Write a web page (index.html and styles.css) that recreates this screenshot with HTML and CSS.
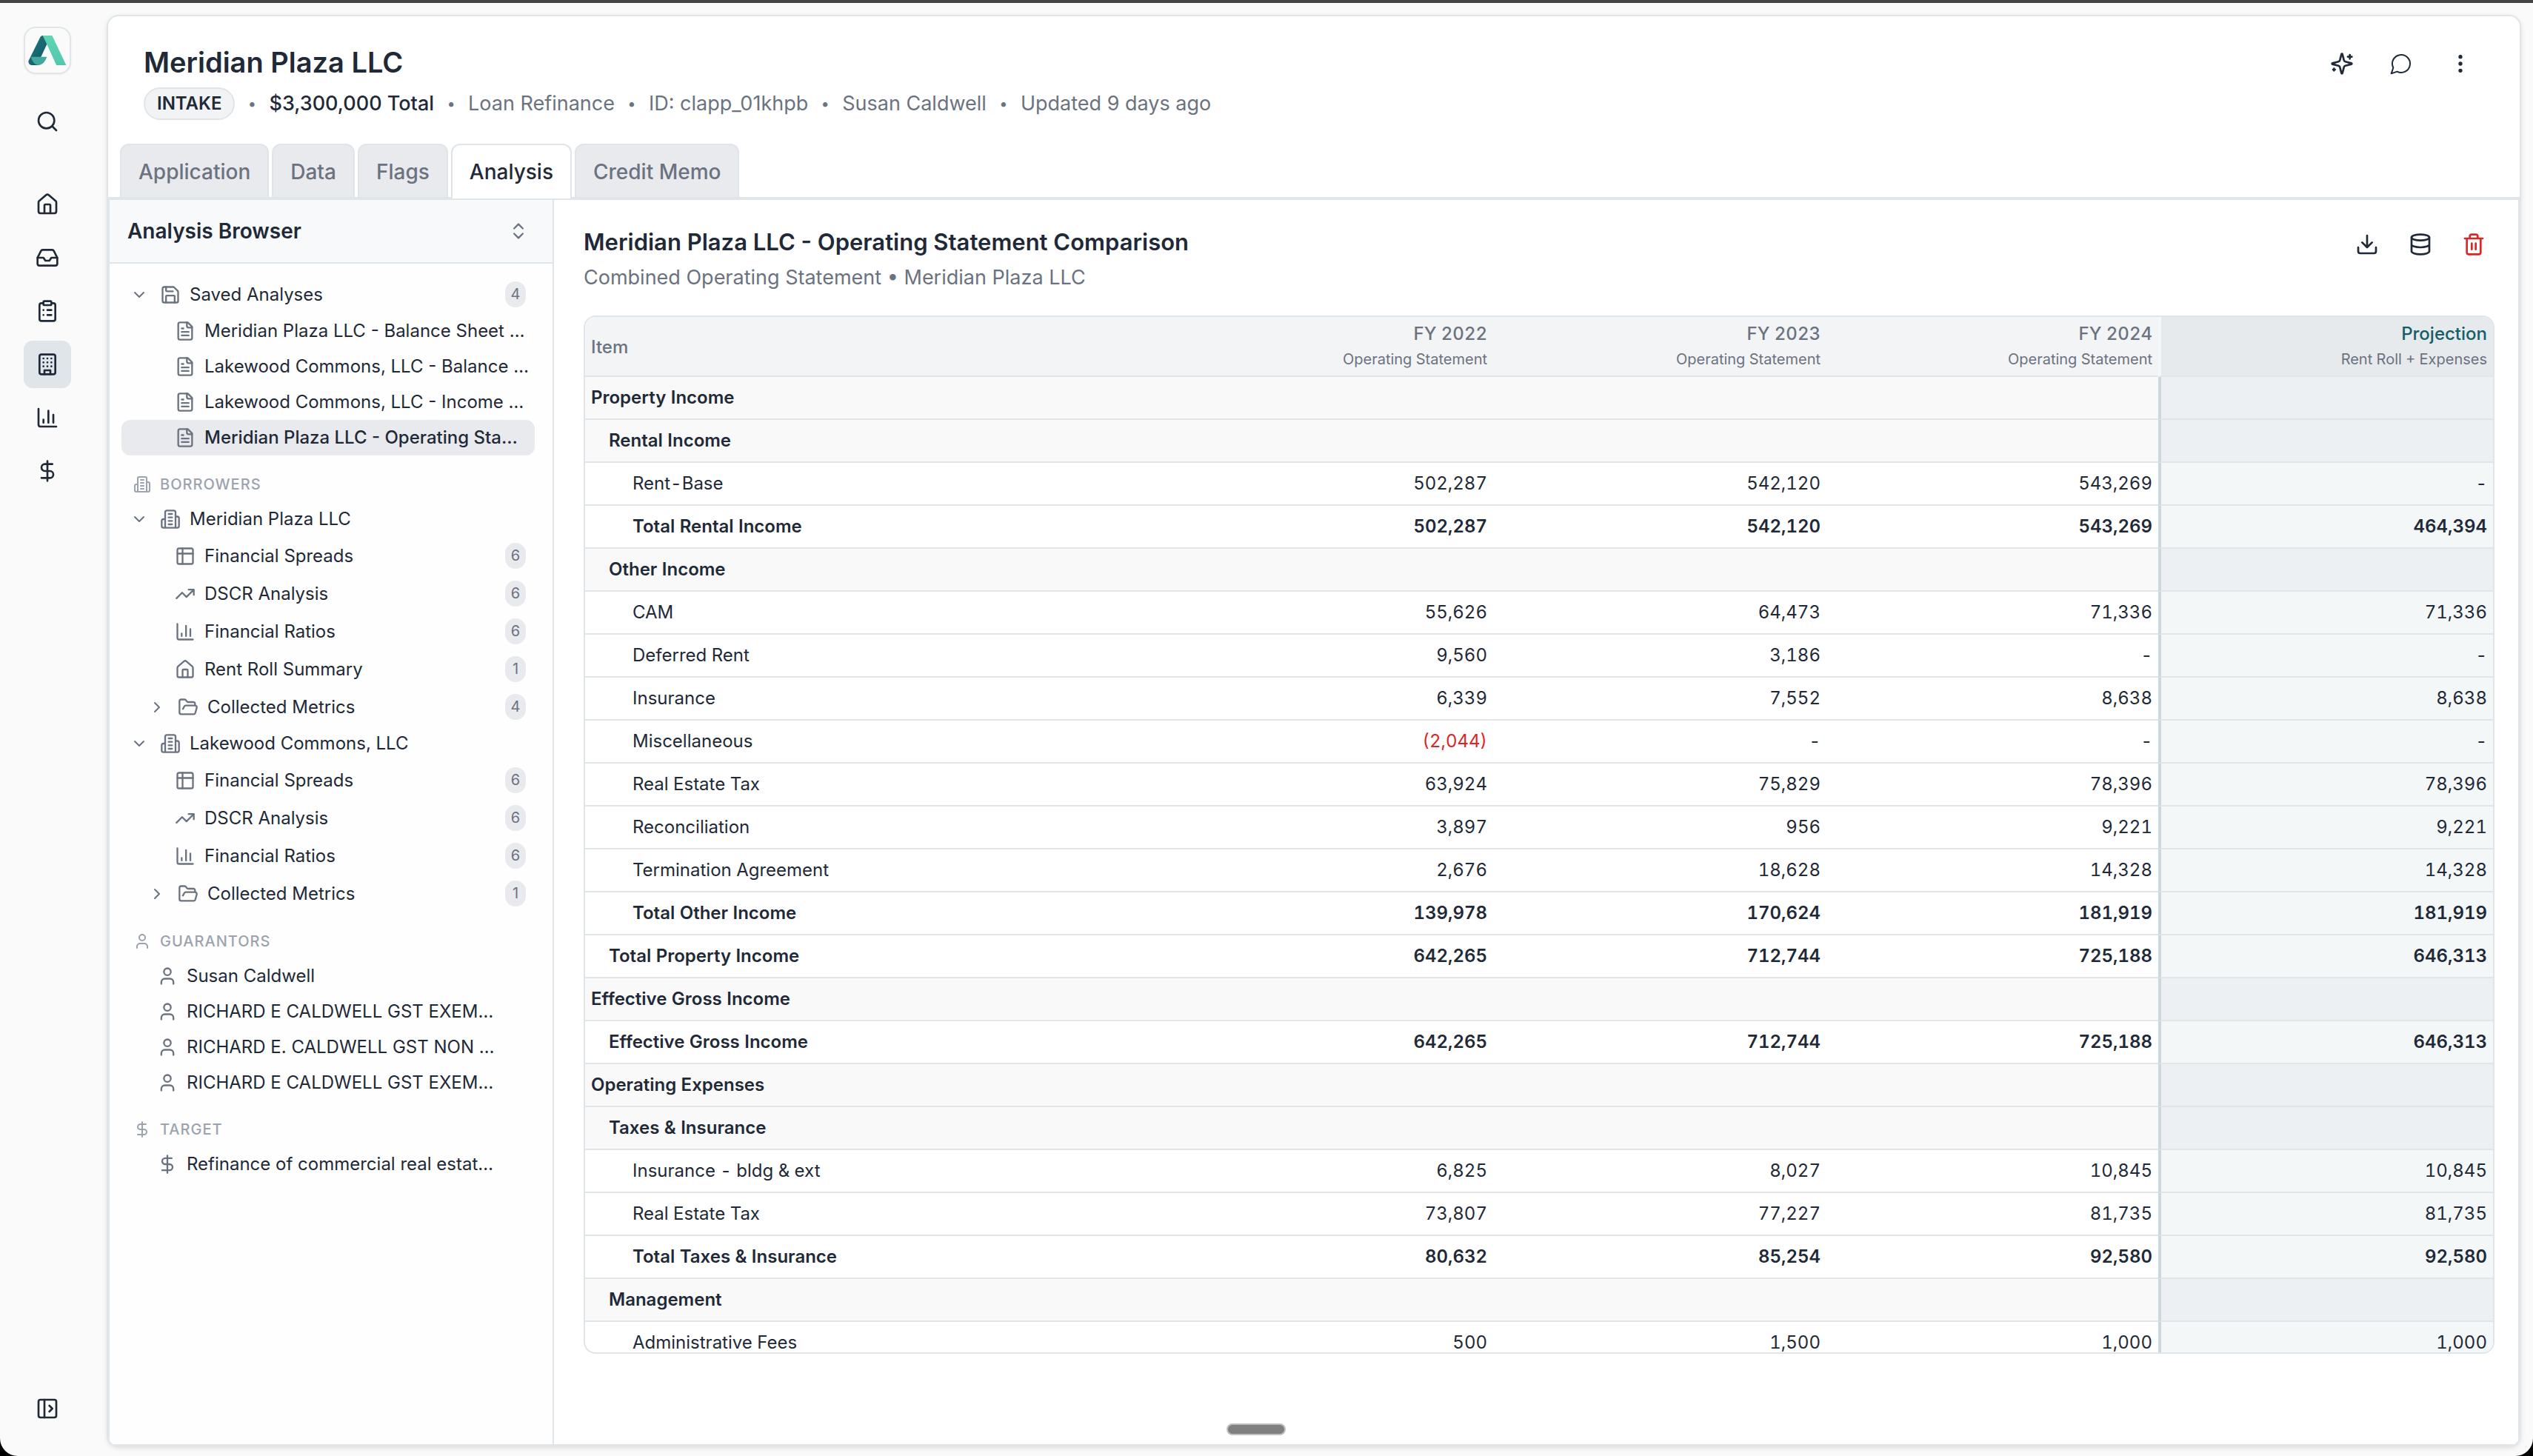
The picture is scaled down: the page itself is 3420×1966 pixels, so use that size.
FILE: index.html
```html
<!DOCTYPE html>
<html lang="en">
<head>
<meta charset="utf-8">
<title>Meridian Plaza LLC - Analysis</title>
<link rel="stylesheet" href="styles.css">
</head>
<body>
<svg class="sprite" aria-hidden="true">
  <defs>
    <linearGradient id="logo-dark" x1="0" y1="0" x2="1" y2="1"><stop offset="0" stop-color="#1f7a83"/><stop offset="1" stop-color="#125561"/></linearGradient>
    <linearGradient id="logo-light" x1="0" y1="0" x2="0" y2="1"><stop offset="0" stop-color="#5fd6b2"/><stop offset="1" stop-color="#54c6ae"/></linearGradient>
  </defs>
  <symbol id="logo" viewBox="0 0 154 122">
    <path fill="url(#logo-dark)" d="M49 7Q52 2 58 2H66L76 34L50 90L42 120H16Q2 120 1 106Q2 101 5 96Z"/>
    <path fill="url(#logo-light)" d="M58 2H96L152 120H113L74 34Z"/>
    <path fill="#43a99f" d="M12 87H75C68 106 58 120 40 120C26 118 14 104 12 87Z"/>
  </symbol>
  <symbol id="search" viewBox="0 0 24 24"><circle cx="11" cy="11" r="8"/><path d="m21 21-4.3-4.3"/></symbol>
  <symbol id="home" viewBox="0 0 24 24"><path d="M15 21v-8a1 1 0 0 0-1-1h-4a1 1 0 0 0-1 1v8"/><path d="M3 10a2 2 0 0 1 .709-1.528l7-5.999a2 2 0 0 1 2.582 0l7 5.999A2 2 0 0 1 21 10v9a2 2 0 0 1-2 2H5a2 2 0 0 1-2-2z"/></symbol>
  <symbol id="inbox" viewBox="0 0 24 24"><path d="M22 12h-6l-2 3h-4l-2-3H2"/><path d="M5.45 5.11 2 12v6a2 2 0 0 0 2 2h16a2 2 0 0 0 2-2v-6l-3.45-6.89A2 2 0 0 0 16.76 4H7.24a2 2 0 0 0-1.79 1.11z"/></symbol>
  <symbol id="clipboard" viewBox="0 0 24 24"><rect x="8" y="2" width="8" height="4" rx="1"/><path d="M16 4h2a2 2 0 0 1 2 2v14a2 2 0 0 1-2 2H6a2 2 0 0 1-2-2V6a2 2 0 0 1 2-2h2M12 11h4M12 16h4M8 11h.01M8 16h.01"/></symbol>
  <symbol id="building" viewBox="0 0 24 24"><rect x="4" y="2" width="16" height="20" rx="2"/><path d="M9 22v-4h6v4M8 6h.01M16 6h.01M12 6h.01M12 10h.01M12 14h.01M16 10h.01M16 14h.01M8 10h.01M8 14h.01"/></symbol>
  <symbol id="chart" viewBox="0 0 24 24"><path d="M3 3v16a2 2 0 0 0 2 2h16M18 17V9M13 17V5M8 17v-3"/></symbol>
  <symbol id="dollar" viewBox="0 0 24 24"><path d="M12 2v20M17 5H9.5a3.5 3.5 0 0 0 0 7h5a3.5 3.5 0 0 1 0 7H6"/></symbol>
  <symbol id="panel-open" viewBox="0 0 24 24"><rect x="3" y="3" width="18" height="18" rx="2"/><path d="M9 3v18M14 9l3 3-3 3"/></symbol>
  <symbol id="sparkles" viewBox="0 0 24 24"><path d="M9.937 15.5A2 2 0 0 0 8.5 14.063l-6.135-1.582a.5.5 0 0 1 0-.962L8.5 9.936A2 2 0 0 0 9.937 8.5l1.582-6.135a.5.5 0 0 1 .963 0L14.063 8.5A2 2 0 0 0 15.5 9.937l6.135 1.581a.5.5 0 0 1 0 .964L15.5 14.063a2 2 0 0 0-1.437 1.437l-1.582 6.135a.5.5 0 0 1-.963 0zM20 3v4M22 5h-4M4 17v2M5 18H3"/></symbol>
  <symbol id="chat" viewBox="0 0 24 24"><path d="M7.9 20A9 9 0 1 0 4 16.1L2 22Z"/></symbol>
  <symbol id="more" viewBox="0 0 24 24"><circle cx="12" cy="12" r="1"/><circle cx="12" cy="5" r="1"/><circle cx="12" cy="19" r="1"/></symbol>
  <symbol id="download" viewBox="0 0 24 24"><path d="M21 15v4a2 2 0 0 1-2 2H5a2 2 0 0 1-2-2v-4M7 10l5 5 5-5M12 15V3"/></symbol>
  <symbol id="database" viewBox="0 0 24 24"><ellipse cx="12" cy="5" rx="9" ry="3"/><path d="M3 5v14a9 3 0 0 0 18 0V5M3 12a9 3 0 0 0 18 0"/></symbol>
  <symbol id="trash" viewBox="0 0 24 24"><path d="M3 6h18M19 6v14a2 2 0 0 1-2 2H7a2 2 0 0 1-2-2V6M8 6V4a2 2 0 0 1 2-2h4a2 2 0 0 1 2 2v2M10 11v6M14 11v6"/></symbol>
  <symbol id="sort" viewBox="0 0 24 24"><path d="m7 15 5 5 5-5M7 9l5-5 5 5"/></symbol>
  <symbol id="down" viewBox="0 0 24 24"><path d="m6 9 6 6 6-6"/></symbol>
  <symbol id="right" viewBox="0 0 24 24"><path d="m9 18 6-6-6-6"/></symbol>
  <symbol id="save" viewBox="0 0 24 24"><path d="M15.2 3a2 2 0 0 1 1.4.6l3.8 3.8a2 2 0 0 1 .6 1.4V19a2 2 0 0 1-2 2H5a2 2 0 0 1-2-2V5a2 2 0 0 1 2-2z"/><path d="M17 21v-7a1 1 0 0 0-1-1H8a1 1 0 0 0-1 1v7M7 3v4a1 1 0 0 0 1 1h7"/></symbol>
  <symbol id="file" viewBox="0 0 24 24"><path d="M15 2H6a2 2 0 0 0-2 2v16a2 2 0 0 0 2 2h12a2 2 0 0 0 2-2V7Z"/><path d="M14 2v4a2 2 0 0 0 2 2h4M10 9H8M16 13H8M16 17H8"/></symbol>
  <symbol id="company" viewBox="0 0 24 24"><path d="M6 22V4a2 2 0 0 1 2-2h8a2 2 0 0 1 2 2v18ZM6 12H4a2 2 0 0 0-2 2v6a2 2 0 0 0 2 2h2M18 9h2a2 2 0 0 1 2 2v9a2 2 0 0 1-2 2h-2M10 6h4M10 10h4M10 14h4M10 18h4"/></symbol>
  <symbol id="spread" viewBox="0 0 24 24"><rect x="3" y="3" width="18" height="18" rx="2"/><path d="M3 9h18M9 3v18"/></symbol>
  <symbol id="trend" viewBox="0 0 24 24"><path d="m22 7-8.5 8.5-5-5L2 17M16 7h6v6"/></symbol>
  <symbol id="folder" viewBox="0 0 24 24"><path d="m6 14 1.5-2.9A2 2 0 0 1 9.24 10H20a2 2 0 0 1 1.94 2.5l-1.54 6a2 2 0 0 1-1.95 1.5H4a2 2 0 0 1-2-2V5a2 2 0 0 1 2-2h3.9a2 2 0 0 1 1.69.9l.81 1.2a2 2 0 0 0 1.67.9H18a2 2 0 0 1 2 2v2"/></symbol>
  <symbol id="user" viewBox="0 0 24 24"><path d="M19 21v-2a4 4 0 0 0-4-4H9a4 4 0 0 0-4 4v2"/><circle cx="12" cy="7" r="4"/></symbol>
</svg>

<div class="app">
  <nav class="rail" aria-label="Main">
    <a class="brand" href="#" aria-label="Start"><svg class="brand-mark"><use href="#logo"/></svg></a>
    <button class="rail-item rail-search" aria-label="Search"><svg class="icon"><use href="#search"/></svg></button>
    <div class="rail-links">
      <a class="rail-item" href="#" aria-label="Home"><svg class="icon"><use href="#home"/></svg></a>
      <a class="rail-item" href="#" aria-label="Inbox"><svg class="icon"><use href="#inbox"/></svg></a>
      <a class="rail-item" href="#" aria-label="Tasks"><svg class="icon"><use href="#clipboard"/></svg></a>
      <a class="rail-item is-active" href="#" aria-label="Applications"><svg class="icon"><use href="#building"/></svg></a>
      <a class="rail-item" href="#" aria-label="Reports"><svg class="icon"><use href="#chart"/></svg></a>
      <a class="rail-item" href="#" aria-label="Pricing"><svg class="icon"><use href="#dollar"/></svg></a>
    </div>
    <button class="rail-item rail-toggle" aria-label="Open sidebar"><svg class="icon"><use href="#panel-open"/></svg></button>
  </nav>

  <div class="panel">
    <header class="record">
      <div class="record-text">
        <h1 class="record-title">Meridian Plaza LLC</h1>
        <div class="record-meta">
          <span class="status">INTAKE</span><span class="dot">•</span>
          <span class="amount">$3,300,000 Total</span><span class="dot">•</span>
          <span>Loan Refinance</span><span class="dot">•</span>
          <span>ID: clapp_01khpb</span><span class="dot">•</span>
          <span>Susan Caldwell</span><span class="dot">•</span>
          <span>Updated 9 days ago</span>
        </div>
      </div>
      <div class="record-actions">
        <button class="icon-button" aria-label="Assistant"><svg class="icon"><use href="#sparkles"/></svg></button>
        <button class="icon-button" aria-label="Comments"><svg class="icon icon-thin"><use href="#chat"/></svg></button>
        <button class="icon-button" aria-label="More"><svg class="icon"><use href="#more"/></svg></button>
      </div>
    </header>

    <nav class="tabs" aria-label="Sections">
      <a class="tab" href="#">Application</a>
      <a class="tab" href="#">Data</a>
      <a class="tab" href="#">Flags</a>
      <a class="tab is-active" href="#">Analysis</a>
      <a class="tab" href="#">Credit Memo</a>
    </nav>

    <div class="workspace">
      <aside class="browser">
        <div class="browser-head">
          <h2 class="browser-title">Analysis Browser</h2>
          <button class="sort" aria-label="Expand all"><svg class="icon-md"><use href="#sort"/></svg></button>
        </div>
        <div class="tree">
          <a class="node branch" href="#"><svg class="chevron"><use href="#down"/></svg><svg class="icon-md"><use href="#save"/></svg><span>Saved Analyses</span><span class="count">4</span></a>
          <a class="node leaf" href="#"><svg class="icon-md"><use href="#file"/></svg><span>Meridian Plaza LLC - Balance Sheet …</span></a>
          <a class="node leaf" href="#"><svg class="icon-md"><use href="#file"/></svg><span>Lakewood Commons, LLC - Balance …</span></a>
          <a class="node leaf" href="#"><svg class="icon-md"><use href="#file"/></svg><span>Lakewood Commons, LLC - Income …</span></a>
          <a class="node leaf is-active" href="#"><svg class="icon-md"><use href="#file"/></svg><span>Meridian Plaza LLC - Operating Sta…</span></a>

          <h3 class="group"><svg class="icon-sm"><use href="#company"/></svg>BORROWERS</h3>
          <a class="node branch" href="#"><svg class="chevron"><use href="#down"/></svg><svg class="icon-md"><use href="#company"/></svg><span>Meridian Plaza LLC</span></a>
          <a class="node leaf" href="#"><svg class="icon-md"><use href="#spread"/></svg><span>Financial Spreads</span><span class="count">6</span></a>
          <a class="node leaf" href="#"><svg class="icon-md"><use href="#trend"/></svg><span>DSCR Analysis</span><span class="count">6</span></a>
          <a class="node leaf" href="#"><svg class="icon-md"><use href="#chart"/></svg><span>Financial Ratios</span><span class="count">6</span></a>
          <a class="node leaf" href="#"><svg class="icon-md"><use href="#home"/></svg><span>Rent Roll Summary</span><span class="count">1</span></a>
          <a class="node subbranch" href="#"><svg class="chevron"><use href="#right"/></svg><svg class="icon-md"><use href="#folder"/></svg><span>Collected Metrics</span><span class="count">4</span></a>
          <a class="node branch" href="#"><svg class="chevron"><use href="#down"/></svg><svg class="icon-md"><use href="#company"/></svg><span>Lakewood Commons, LLC</span></a>
          <a class="node leaf" href="#"><svg class="icon-md"><use href="#spread"/></svg><span>Financial Spreads</span><span class="count">6</span></a>
          <a class="node leaf" href="#"><svg class="icon-md"><use href="#trend"/></svg><span>DSCR Analysis</span><span class="count">6</span></a>
          <a class="node leaf" href="#"><svg class="icon-md"><use href="#chart"/></svg><span>Financial Ratios</span><span class="count">6</span></a>
          <a class="node subbranch" href="#"><svg class="chevron"><use href="#right"/></svg><svg class="icon-md"><use href="#folder"/></svg><span>Collected Metrics</span><span class="count">1</span></a>

          <h3 class="group"><svg class="icon-sm"><use href="#user"/></svg>GUARANTORS</h3>
          <a class="node party" href="#"><svg class="icon-md"><use href="#user"/></svg><span>Susan Caldwell</span></a>
          <a class="node party" href="#"><svg class="icon-md"><use href="#user"/></svg><span>RICHARD E CALDWELL GST EXEM…</span></a>
          <a class="node party" href="#"><svg class="icon-md"><use href="#user"/></svg><span>RICHARD E. CALDWELL GST NON …</span></a>
          <a class="node party" href="#"><svg class="icon-md"><use href="#user"/></svg><span>RICHARD E CALDWELL GST EXEM…</span></a>

          <h3 class="group"><svg class="icon-sm"><use href="#dollar"/></svg>TARGET</h3>
          <a class="node party" href="#"><svg class="icon-md"><use href="#dollar"/></svg><span>Refinance of commercial real estat…</span></a>
        </div>
      </aside>

      <main class="report">
        <div class="report-head">
          <div>
            <h2 class="report-title">Meridian Plaza LLC - Operating Statement Comparison</h2>
            <p class="report-sub">Combined Operating Statement • Meridian Plaza LLC</p>
          </div>
          <div class="report-actions">
            <button class="icon-button" aria-label="Download"><svg class="icon"><use href="#download"/></svg></button>
            <button class="icon-button" aria-label="Data source"><svg class="icon"><use href="#database"/></svg></button>
            <button class="icon-button danger" aria-label="Delete"><svg class="icon"><use href="#trash"/></svg></button>
          </div>
        </div>
        <div class="sheet">
          <table class="statement">
            <colgroup><col><col class="period"><col class="period"><col class="period-last"><col class="projection"></colgroup>
            <thead>
              <tr><th scope="col">Item</th><th scope="col">FY 2022<small>Operating Statement</small></th><th scope="col">FY 2023<small>Operating Statement</small></th><th scope="col">FY 2024<small>Operating Statement</small></th><th scope="col"><span class="accent">Projection</span><small>Rent Roll + Expenses</small></th></tr>
            </thead>
            <tbody>
              <tr class="section"><th scope="row">Property Income</th><td></td><td></td><td></td><td></td></tr>
              <tr class="section l1"><th scope="row">Rental Income</th><td></td><td></td><td></td><td></td></tr>
              <tr class="l2"><th scope="row">Rent-Base</th><td>502,287</td><td>542,120</td><td>543,269</td><td>-</td></tr>
              <tr class="total l2"><th scope="row">Total Rental Income</th><td>502,287</td><td>542,120</td><td>543,269</td><td>464,394</td></tr>
              <tr class="section l1"><th scope="row">Other Income</th><td></td><td></td><td></td><td></td></tr>
              <tr class="l2"><th scope="row">CAM</th><td>55,626</td><td>64,473</td><td>71,336</td><td>71,336</td></tr>
              <tr class="l2"><th scope="row">Deferred Rent</th><td>9,560</td><td>3,186</td><td>-</td><td>-</td></tr>
              <tr class="l2"><th scope="row">Insurance</th><td>6,339</td><td>7,552</td><td>8,638</td><td>8,638</td></tr>
              <tr class="l2"><th scope="row">Miscellaneous</th><td class="negative">(2,044)</td><td>-</td><td>-</td><td>-</td></tr>
              <tr class="l2"><th scope="row">Real Estate Tax</th><td>63,924</td><td>75,829</td><td>78,396</td><td>78,396</td></tr>
              <tr class="l2"><th scope="row">Reconciliation</th><td>3,897</td><td>956</td><td>9,221</td><td>9,221</td></tr>
              <tr class="l2"><th scope="row">Termination Agreement</th><td>2,676</td><td>18,628</td><td>14,328</td><td>14,328</td></tr>
              <tr class="total l2"><th scope="row">Total Other Income</th><td>139,978</td><td>170,624</td><td>181,919</td><td>181,919</td></tr>
              <tr class="total l1"><th scope="row">Total Property Income</th><td>642,265</td><td>712,744</td><td>725,188</td><td>646,313</td></tr>
              <tr class="section"><th scope="row">Effective Gross Income</th><td></td><td></td><td></td><td></td></tr>
              <tr class="total l1"><th scope="row">Effective Gross Income</th><td>642,265</td><td>712,744</td><td>725,188</td><td>646,313</td></tr>
              <tr class="section"><th scope="row">Operating Expenses</th><td></td><td></td><td></td><td></td></tr>
              <tr class="section l1"><th scope="row">Taxes &amp; Insurance</th><td></td><td></td><td></td><td></td></tr>
              <tr class="l2"><th scope="row">Insurance - bldg &amp; ext</th><td>6,825</td><td>8,027</td><td>10,845</td><td>10,845</td></tr>
              <tr class="l2"><th scope="row">Real Estate Tax</th><td>73,807</td><td>77,227</td><td>81,735</td><td>81,735</td></tr>
              <tr class="total l2"><th scope="row">Total Taxes &amp; Insurance</th><td>80,632</td><td>85,254</td><td>92,580</td><td>92,580</td></tr>
              <tr class="section l1"><th scope="row">Management</th><td></td><td></td><td></td><td></td></tr>
              <tr class="l2"><th scope="row">Administrative Fees</th><td>500</td><td>1,500</td><td>1,000</td><td>1,000</td></tr>
            </tbody>
          </table>
        </div>
      </main>
    </div>
  </div>
  <div class="grabber"></div>
</div>
</body>
</html>
```
FILE: styles.css
```css
:root {
  --ink: #1f2937;
  --muted: #6b7280;
  --line: #dfe5e8;
  --chip: #e9eaee;
  --rail: #fafafa;
}

* { box-sizing: border-box; }

body {
  margin: 0;
  background: #000;
  color: var(--ink);
  font-family: Inter, "Liberation Sans", sans-serif;
  font-size: 24px;
  line-height: 32px;
}

h1, h2, h3, p { margin: 0; font-weight: inherit; }
a { color: inherit; text-decoration: none; }
button { padding: 0; border: 0; background: none; color: inherit; font: inherit; }

svg { display: block; flex: none; fill: none; stroke: currentColor; stroke-width: 2; stroke-linecap: round; stroke-linejoin: round; }
.sprite { position: absolute; width: 0; height: 0; }
.icon { width: 32px; height: 32px; }
.icon-thin { stroke-width: 1.5; }
.icon-md { width: 28px; height: 28px; }
.icon-sm { width: 24px; height: 24px; }

.app {
  position: relative;
  display: flex;
  height: 100vh;
  padding: 16px 16px 12px 0;
  border-top: 4px solid #444;
  border-radius: 0 0 24px 24px;
  background: var(--rail);
}

/* Icon rail */
.rail { display: flex; flex: none; flex-direction: column; align-items: center; width: 144px; padding: 16px 16px 20px 0; }
.brand { display: flex; align-items: center; justify-content: center; width: 64px; height: 64px; border: 2px solid var(--line); border-radius: 16px; box-shadow: 0 1px 2px #0000000d; }
.brand-mark { width: 52px; height: 42px; stroke: none; }
.rail-item { display: flex; align-items: center; justify-content: center; width: 64px; height: 64px; border-radius: 12px; }
.rail-item.is-active { background: var(--line); }
.rail-search { margin-top: 32px; }
.rail-links { display: flex; flex-direction: column; gap: 8px; margin-top: 48px; }
.rail-toggle { margin-top: auto; }

/* Record panel */
.panel {
  display: flex;
  flex: 1;
  flex-direction: column;
  min-width: 0;
  overflow: hidden;
  border: 2px solid var(--line);
  border-radius: 16px;
  background: #fff;
  box-shadow: 0 2px 6px #0000001a;
}
.record { display: flex; justify-content: space-between; padding: 32px 52px 32px 48px; }
.record-title { font-size: 38px; font-weight: 600; line-height: 60px; }
.record-meta { display: flex; align-items: center; gap: 16px; margin-top: 4px; color: var(--muted); font-size: 27px; line-height: 44px; }
.dot { width: 14px; font-size: 20px; text-align: center; }
.status { height: 44px; padding: 0 16px; border: 2px solid var(--line); border-radius: 22px; background: #f1f3f5; color: var(--ink); font-size: 24px; font-weight: 600; line-height: 40px; }
.amount { color: var(--ink); font-weight: 500; }
.record-actions { display: flex; gap: 24px; padding-top: 4px; }
.icon-button { display: flex; align-items: center; justify-content: center; width: 56px; height: 56px; border-radius: 12px; }
.danger { color: #dc2626; }

.tabs { display: flex; gap: 4px; padding: 0 16px; border-bottom: 2px solid var(--line); }
.tab { height: 72px; padding: 0 23px; border: 2px solid var(--line); border-bottom: 0; border-radius: 12px 12px 0 0; background: var(--chip); color: var(--muted); font-size: 28px; font-weight: 500; line-height: 72px; }
.tab.is-active { height: 74px; margin-bottom: -2px; background: #fff; color: var(--ink); }

.workspace { display: flex; flex: 1; min-height: 0; border: 2px solid var(--line); }

/* Analysis browser */
.browser { display: flex; flex: none; flex-direction: column; width: 600px; border-right: 2px solid var(--line); background: #fefefe; }
.browser-head { display: flex; align-items: center; justify-content: space-between; height: 86px; padding: 0 32px 0 24px; border-bottom: 2px solid var(--line); background: #f8f9fb; }
.browser-title { font-size: 28px; font-weight: 600; }
.sort { color: var(--muted); }
.tree { padding: 16px 24px 16px 16px; }
.node { display: flex; align-items: center; gap: 12px; padding: 8px 12px; border-radius: 12px; white-space: nowrap; }
.node svg { color: var(--muted); }
.chevron { width: 24px; height: 24px; margin-right: 4px; }
.leaf { padding-left: 72px; }
.subbranch { padding-left: 36px; }
.party { padding-left: 48px; }
.node.is-active { background: var(--chip); font-weight: 500; }
.count { width: 28px; height: 35px; margin-left: auto; border-radius: 14px; background: var(--chip); color: var(--muted); font-size: 20px; line-height: 35px; text-align: center; }
.group { display: flex; align-items: center; gap: 12px; padding: 23px 16px 7px; color: #9ca3af; font-size: 20px; font-weight: 500; letter-spacing: 1px; }

/* Report */
.report { display: flex; flex: 1; flex-direction: column; min-width: 0; padding: 32px 32px 122px 40px; }
.report-head { display: flex; justify-content: space-between; }
.report-title { font-size: 31px; font-weight: 600; line-height: 50px; }
.report-sub { color: var(--muted); font-size: 27px; line-height: 46px; }
.report-actions { display: flex; gap: 16px; }

.sheet { flex: 1; min-height: 0; margin-top: 28px; overflow: hidden; border: 2px solid var(--line); border-radius: 16px; }
.statement { width: 100%; border-collapse: separate; border-spacing: 0; table-layout: fixed; font-variant-numeric: tabular-nums; }
.period { width: 450px; }
.period-last { width: 448px; }
.projection { width: 452px; }
.statement th, .statement td { height: 58px; padding: 0 8px; border-bottom: 2px solid var(--line); font-weight: 400; text-align: right; }
.statement th:first-child { text-align: left; }
.statement thead th { height: 81px; padding-top: 2px; background: #f3f4f6; color: var(--muted); font-weight: 500; }
.statement thead th:last-child { border-left: 4px solid #f4f6f7; background: #e6eaec; background-clip: padding-box; }
.statement small { display: block; font-size: 20px; font-weight: 400; line-height: 36px; }
.accent { color: #155e69; }
.statement tbody td:last-child { border-left: 4px solid #cbd8dd; background: #f3f7f8; }
.section th, .section td { background: #f9f9f9; }
.statement .section th, .statement .total th, .statement .total td { font-weight: 600; }
.statement .section td:last-child { background: #ecf0f3; }
.statement .l1 th { padding-left: 32px; }
.statement .l2 th { padding-left: 64px; }
.statement .negative { color: #dc2626; }

.grabber { position: absolute; bottom: 28px; left: calc(50% - 54px); width: 80px; height: 16px; border: 2px solid #bfbfbf; border-radius: 8px; background: #808080; }
```
